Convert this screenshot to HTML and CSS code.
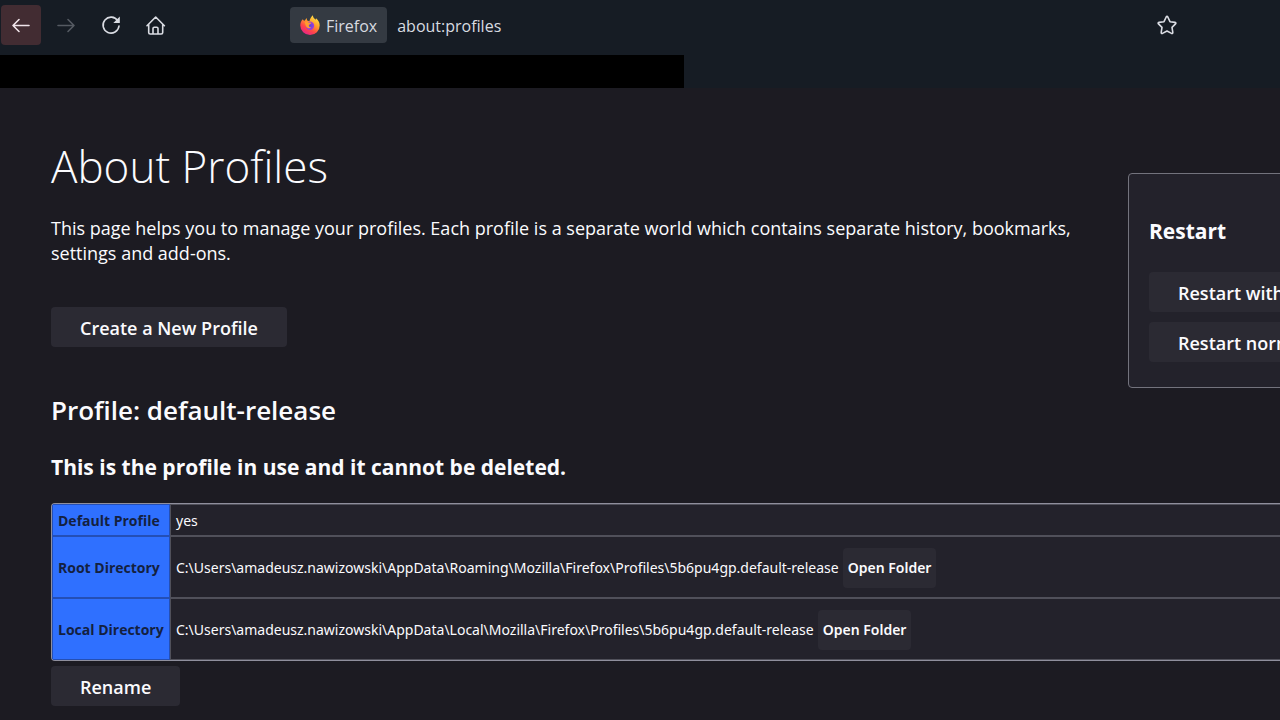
FILE: index.html
```html
<!DOCTYPE html>
<html lang="en">
<head>
<meta charset="utf-8">
<title>About Profiles</title>
<link rel="stylesheet" href="styles.css">
</head>
<body>
<header class="chrome">
  <nav class="toolbar" aria-label="Browser toolbar">
    <div class="nav-buttons">
      <button class="icon-button back" aria-label="Back"><svg viewBox="0 0 20 20"><path d="M18 10.500H2M8 4.500l-6 6 6 6"/></svg></button>
      <button class="icon-button forward" aria-label="Forward"><svg viewBox="0 0 20 20"><path d="M2 10.500h16M12 4.500l6 6-6 6"/></svg></button>
      <button class="icon-button" aria-label="Reload"><svg viewBox="0 0 20 20"><path d="M16.800 5.800A8 8 0 1 0 18 11"/><path class="solid" d="M18.800 1.500v6.500h-6.500z"/></svg></button>
      <button class="icon-button" aria-label="Home"><svg viewBox="0 0 20 20"><path d="M1 10.700L9.700 2l8.700 8.700M2.700 9.500v8c0 1 .6 1.500 1.500 1.500h11c.9 0 1.500-.5 1.500-1.500v-8M7 18.800v-5.300c0-.8.500-1.300 1.300-1.300h2.400c.8 0 1.300.5 1.300 1.300v5.300"/></svg></button>
    </div>
    <div class="address">
      <span class="identity">
        <svg class="logo" viewBox="0 0 20 20" aria-hidden="true">
          <defs>
            <linearGradient id="flame" x1=".85" y1="0" x2=".25" y2="1"><stop offset="0" stop-color="#fff04a"/><stop offset=".4" stop-color="#ffa02c"/><stop offset=".7" stop-color="#ff4648"/><stop offset="1" stop-color="#e5208f"/></linearGradient>
            <radialGradient id="globe"><stop offset="0" stop-color="#5b48d8"/><stop offset="1" stop-color="#a33bd8"/></radialGradient>
          </defs>
          <path fill="url(#flame)" d="M2.800 4.200l1.100 1.500 1-.3L6.500 3l.7 2.500 2.200.7C10 4 11 1.500 12.900.2c0 2.300 1.500 3.200 2.700 4.600l.4-1.500c2.300 1.800 3.700 4.200 3.700 7.100A9.700 9.500 0 0 1 .3 10.500c0-2.600.9-4.800 2.500-6.300z"/>
          <circle cx="10" cy="10.700" r="4.200" fill="url(#globe)"/>
          <path fill="#ff9d2d" d="M4.600 7.100c1.500-.8 3-.5 4.200.5l2.700.2c-.4 1.300-2 1.400-2.600 2.200-.4 1.600.6 2.400 2.200 2.400-1.300 1.500-4 1-5-.9-.8-1.500-.8-3-1.500-4.400z"/>
        </svg>
        <span>Firefox</span>
      </span>
      <span class="url">about:profiles</span>
    </div>
    <button class="icon-button star" aria-label="Bookmark this page"><svg viewBox="0 0 20 20"><path d="M8.200 2q.8-1.400 1.600 0L12 6.700l5 .7q1.500.3.500 1.500L14 12.400l.8 5q.1 1.500-1.300 1L9 16l-4.500 2.400q-1.400.5-1.300-1l.8-5L.5 8.900q-1-1.200.5-1.500l5-.7z"/></svg></button>
  </nav>
  <div class="bookmarks"><div class="redacted"></div></div>
</header>
<main class="page">
  <div class="top">
    <section class="intro">
      <h1>About Profiles</h1>
      <p>This page helps you to manage your profiles. Each profile is a separate world which contains separate history, bookmarks, settings and add-ons.</p>
      <button class="button">Create a New Profile</button>
    </section>
    <aside class="restart">
      <h3>Restart</h3>
      <button class="button">Restart with Add-ons Disabled…</button>
      <button class="button">Restart normally…</button>
    </aside>
  </div>
  <section class="profile">
    <h2>Profile: default-release</h2>
    <h3>This is the profile in use and it cannot be deleted.</h3>
    <table>
      <tbody>
        <tr class="plain"><th scope="row">Default Profile</th><td>yes</td></tr>
        <tr><th scope="row">Root Directory</th><td><div class="directory">C:\Users\amadeusz.nawizowski\AppData\Roaming\Mozilla\Firefox\Profiles\5b6pu4gp.default-release<button class="button small">Open Folder</button></div></td></tr>
        <tr><th scope="row">Local Directory</th><td><div class="directory">C:\Users\amadeusz.nawizowski\AppData\Local\Mozilla\Firefox\Profiles\5b6pu4gp.default-release<button class="button small">Open Folder</button></div></td></tr>
      </tbody>
    </table>
    <button class="button">Rename</button>
  </section>
</main>
</body>
</html>
```
FILE: styles.css
```css
* { box-sizing: border-box; }
body {
  margin: 0;
  min-height: 100vh;
  background: #1c1b22;
  color: #fbfbfe;
  font-family: "Open Sans", "Noto Sans", sans-serif;
  font-size: 18px;
  line-height: 25px;
}
button { font: inherit; color: inherit; border: 0; cursor: pointer; }
h1, h2, h3, p { margin: 0; }

.chrome { background: #161c24; }
.toolbar {
  display: flex;
  align-items: center;
  height: 54px;
  padding: 0 92px 4px 1px;
}
.nav-buttons { display: flex; gap: 5px; }
.icon-button {
  display: grid;
  place-items: center;
  width: 40px;
  height: 40px;
  padding: 0;
  border-radius: 4px;
  background: transparent;
  color: #dadce3;
}
.icon-button svg {
  width: 20px;
  height: 20px;
  overflow: visible;
  fill: none;
  stroke: currentColor;
  stroke-width: 1.6;
  stroke-linecap: round;
  stroke-linejoin: round;
}
.icon-button .solid { fill: currentColor; stroke: none; }
.back { background: #422c32; color: #f0e4ea; }
.forward { color: #555a62; }
.address {
  display: flex;
  flex: 1;
  align-items: center;
  gap: 10px;
  margin-left: 114px;
  color: #d8dbe0;
  font-size: 16px;
}
.identity {
  display: flex;
  align-items: center;
  gap: 6px;
  height: 36px;
  padding: 0 10px;
  border-radius: 4px;
  background: #343a42;
}
.identity span, .url { padding-top: 2px; }
.logo { width: 20px; height: 20px; }
.bookmarks { padding-top: 1px; }
.redacted { width: 684px; max-width: 100%; height: 33px; background: #000; }

.page { padding: 50px 0 14px 51px; overflow: hidden; }
.top {
  display: flex;
  align-items: flex-start;
  gap: 40px;
  margin-right: -230px;
}
.intro { flex: 1; }
h1 { font-size: 44px; font-weight: 300; line-height: 56px; }
.intro p { margin: 22px 0 41px; }
.button {
  display: block;
  height: 40px;
  padding: 2px 29px 0;
  border-radius: 4px;
  background: #2b2a33;
  font-size: 18px;
  font-weight: 600;
  white-space: nowrap;
}
.restart {
  width: 382px;
  margin-top: 35px;
  padding: 42px 20px 25px;
  border: 1px solid #73737d;
  border-radius: 4px;
  background: #23222b;
}
h3 { font-size: 21px; font-weight: 700; line-height: 30px; }
.restart h3 { margin-bottom: 26px; }
.restart .button + .button { margin-top: 10px; }

.profile { margin-top: 4px; }
h2 { font-size: 26px; font-weight: 600; line-height: 36px; }
.profile h3 { margin: 24px 0 21px; }
table {
  width: 100%;
  border: 1px solid #8f8f9d;
  border-right: 0;
  border-radius: 4px 0 0 4px;
  border-spacing: 0;
  overflow: hidden;
  background: #23222b;
  font-size: 14px;
  line-height: 20px;
}
th, td {
  height: 62px;
  padding: 1px 5px 0;
  border: 1px solid #50505a;
  text-align: left;
  white-space: nowrap;
}
td { border-right: 0; font-family: "Noto Sans", "Open Sans", sans-serif; }
th {
  width: 118px;
  border-color: #244fb5;
  background: #2f70ff;
  color: #14213f;
}
.plain th, .plain td { height: 32px; }
.directory { display: flex; align-items: center; gap: 4px; }
.small { padding: 0 5px; font-size: 14px; }
.profile > .button { margin-top: 5px; }
```
